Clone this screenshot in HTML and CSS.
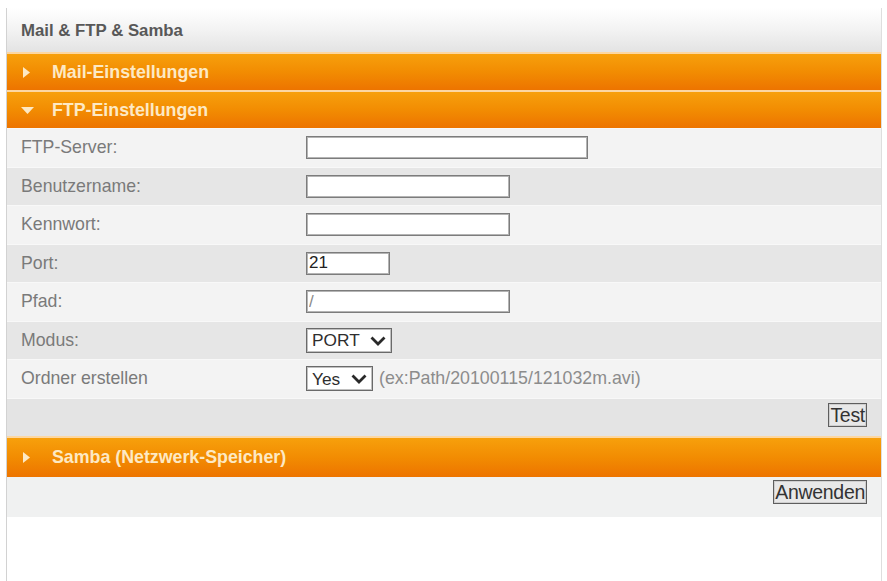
FILE: index.html
```html
<!DOCTYPE html>
<html lang="de">
<head>
<meta charset="utf-8">
<title>Mail &amp; FTP &amp; Samba</title>
<link rel="stylesheet" href="styles.css">
</head>
<body>
<div class="panel">
  <div class="panel-head">Mail &amp; FTP &amp; Samba</div>

  <div class="bar">
    <svg class="tri-right" width="7" height="11" viewBox="0 0 7 11"><polygon points="0,0 7,5.5 0,11" fill="#fde9c4"/></svg>
    <span class="bar-title">Mail-Einstellungen</span>
  </div>

  <div class="bar">
    <svg class="tri-down" width="13" height="7" viewBox="0 0 13 7"><polygon points="0,0 13,0 6.5,7" fill="#fde9c4"/></svg>
    <span class="bar-title">FTP-Einstellungen</span>
  </div>

  <div class="rows">
    <div class="row light">
      <span class="label">FTP-Server:</span>
      <input class="field w-long" type="text">
    </div>
    <div class="row dark">
      <span class="label">Benutzername:</span>
      <input class="field w-mid" type="text">
    </div>
    <div class="row light">
      <span class="label">Kennwort:</span>
      <input class="field w-mid" type="password">
    </div>
    <div class="row dark">
      <span class="label">Port:</span>
      <input class="field w-short" type="text" value="21">
    </div>
    <div class="row light">
      <span class="label">Pfad:</span>
      <input class="field w-mid muted" type="text" value="/">
    </div>
    <div class="row dark">
      <span class="label">Modus:</span>
      <span class="select w-port">
        <select><option>PORT</option><option>PASV</option></select>
        <svg class="chev" width="16" height="10" viewBox="0 0 16 10"><polyline points="1.5,1.5 8,8 14.5,1.5" fill="none" stroke="#2a2a2a" stroke-width="2.8" stroke-linejoin="miter"/></svg>
      </span>
    </div>
    <div class="row light">
      <span class="label">Ordner erstellen</span>
      <span class="select w-yes">
        <select><option>Yes</option><option>No</option></select>
        <svg class="chev" width="16" height="10" viewBox="0 0 16 10"><polyline points="1.5,1.5 8,8 14.5,1.5" fill="none" stroke="#2a2a2a" stroke-width="2.8" stroke-linejoin="miter"/></svg>
      </span>
      <span class="hint">(ex:Path/20100115/121032m.avi)</span>
    </div>
    <div class="row action">
      <button class="btn" type="button">Test</button>
    </div>
  </div>

  <div class="bar bar-tall">
    <svg class="tri-right" width="7" height="11" viewBox="0 0 7 11"><polygon points="0,0 7,5.5 0,11" fill="#fde9c4"/></svg>
    <span class="bar-title">Samba (Netzwerk-Speicher)</span>
  </div>

  <div class="apply">
    <button class="btn" type="button">Anwenden</button>
  </div>
</div>
</body>
</html>
```

FILE: styles.css
```css
html, body {
  margin: 0;
  padding: 0;
  background: #ffffff;
}

body {
  font-family: "Liberation Sans", Arial, sans-serif;
  overflow: hidden;
}

.panel {
  margin: 8px 0 0 6px;
  width: 876px;
  min-height: calc(100vh - 8px);
  border-left: 1px solid #d2d2d2;
  border-right: 1px solid #dedede;
  box-sizing: border-box;
  background: #ffffff;
}

.panel-head {
  height: 44px;
  box-sizing: border-box;
  padding-left: 14px;
  display: flex;
  align-items: center;
  padding-top: 2px;
  font-size: 16.8px;
  font-weight: bold;
  color: #585858;
  background: linear-gradient(to bottom, #ffffff 0%, #f4f4f4 45%, #e3e3e3 100%);
}

.bar {
  height: 38px;
  box-sizing: border-box;
  border-top: 2px solid #fcd7a2;
  display: flex;
  align-items: center;
  background: linear-gradient(to bottom, #f7a00c 0%, #f28c02 50%, #ed7400 100%);
}

.bar.bar-tall {
  height: 41px;
}

.tri-right {
  margin-left: 16px;
  margin-right: 22px;
  flex: none;
}

.tri-down {
  margin-left: 14px;
  margin-right: 18px;
  flex: none;
}

.bar-title {
  font-size: 17.8px;
  font-weight: bold;
  color: #fde9c4;
}

.row {
  height: 38.5px;
  box-sizing: border-box;
  display: flex;
  align-items: center;
  border-top: 1px solid #f8f8f8;
}

.row.light {
  background: #f3f3f3;
}

.row.dark {
  background: #e6e6e6;
}

.row.action {
  background: #e4e4e4;
  justify-content: flex-end;
  padding-right: 14px;
  align-items: flex-start;
  padding-top: 4px;
}

.label {
  width: 299px;
  flex: none;
  box-sizing: border-box;
  padding-left: 14px;
  font-size: 17.7px;
  color: #7a7a7a;
}

.field {
  height: 23px;
  box-sizing: border-box;
  margin: 0;
  padding: 0 2px;
  border: 1px solid #7c7c7c;
  box-shadow: inset 0 0 0 1px #b4b4b4;
  background: #ffffff;
  font-family: "Liberation Sans", Arial, sans-serif;
  font-size: 17px;
  color: #222222;
  outline: none;
}

.field.muted {
  color: #8a8a8a;
}

.w-long { width: 282px; }
.w-mid { width: 204px; }
.w-short { width: 84px; }

.select {
  position: relative;
  display: inline-block;
  height: 25px;
  flex: none;
}

.select select {
  appearance: none;
  -webkit-appearance: none;
  width: 100%;
  height: 25px;
  box-sizing: border-box;
  margin: 0;
  padding: 0 0 0 5px;
  border: 1px solid #6a6a6a;
  box-shadow: inset 0 0 0 1px #c0c0c0;
  border-radius: 0;
  background: #ffffff;
  font-family: "Liberation Sans", Arial, sans-serif;
  font-size: 17.3px;
  color: #2e2e2e;
  outline: none;
}

.select .chev {
  position: absolute;
  right: 6px;
  top: 8px;
  pointer-events: none;
}

.w-port { width: 86px; }
.w-yes { width: 67px; }

.hint {
  margin-left: 6px;
  font-size: 17.8px;
  color: #8c8c8c;
}

.btn {
  margin: 0;
  padding: 0 1px;
  height: 24px;
  box-sizing: border-box;
  border: 1px solid #5e5e5e;
  box-shadow: inset 0 0 0 1px #cfcfcf;
  border-radius: 0;
  background: #e8e8e8;
  font-family: "Liberation Sans", Arial, sans-serif;
  font-size: 19.5px;
  line-height: 20px;
  color: #333333;
  letter-spacing: -0.3px;
}

.apply {
  height: 40px;
  box-sizing: border-box;
  background: #f0f1f1;
  display: flex;
  justify-content: flex-end;
  align-items: flex-start;
  padding-right: 14px;
  padding-top: 3px;
}
```
